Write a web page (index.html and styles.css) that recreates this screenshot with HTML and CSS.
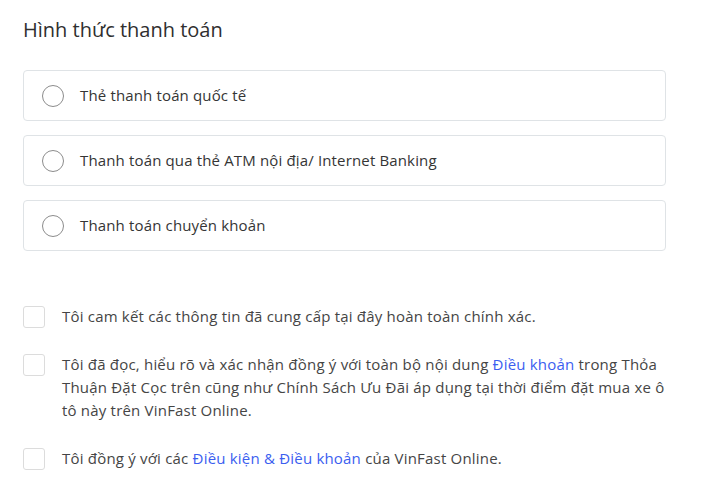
FILE: index.html
```html
<!DOCTYPE html>
<html lang="vi">
<head>
<meta charset="utf-8">
<link rel="stylesheet" href="styles.css">
</head>
<body>
<div class="page">
  <h2 class="title">Hình thức thanh toán</h2>
  <div class="methods">
    <label class="method"><span class="radio"></span><span class="method-text">Thẻ thanh toán quốc tế</span></label>
    <label class="method"><span class="radio"></span><span class="method-text">Thanh toán qua thẻ ATM nội địa/ Internet Banking</span></label>
    <label class="method"><span class="radio"></span><span class="method-text">Thanh toán chuyển khoản</span></label>
  </div>
  <div class="terms">
    <label class="term"><span class="box"></span><span class="term-text">Tôi cam kết các thông tin đã cung cấp tại đây hoàn toàn chính xác.</span></label>
    <label class="term"><span class="box"></span><span class="term-text">Tôi đã đọc, hiểu rõ và xác nhận đồng ý với toàn bộ nội dung <a class="link">Điều khoản</a> trong Thỏa Thuận Đặt Cọc trên cũng như Chính Sách Ưu Đãi áp dụng tại thời điểm đặt mua xe ô tô này trên VinFast Online.</span></label>
    <label class="term"><span class="box"></span><span class="term-text">Tôi đồng ý với các <a class="link">Điều kiện &amp; Điều khoản</a> của VinFast Online.</span></label>
  </div>
</div>
</body>
</html>
```
FILE: styles.css
```css
html, body {
  margin: 0;
  padding: 0;
  background: #ffffff;
}
body {
  font-family: "Open Sans", "Noto Sans", sans-serif;
  color: #3c3c3c;
}
.page {
  width: 643px;
  padding: 16px 0 0 23px;
}
.title {
  margin: 0;
  font-size: 20px;
  font-weight: 400;
  line-height: 28px;
  color: #2f2f2f;
}
.methods {
  margin-top: 26px;
  display: flex;
  flex-direction: column;
  gap: 14px;
}
.method {
  display: flex;
  align-items: center;
  height: 51px;
  box-sizing: border-box;
  border: 1px solid #dfe3e6;
  border-radius: 4px;
  padding-left: 18px;
}
.radio {
  width: 22px;
  height: 22px;
  box-sizing: border-box;
  border: 1px solid #8c8c8c;
  border-radius: 50%;
  flex: none;
}
.method-text {
  margin-left: 16px;
  margin-top: -1px;
  font-size: 15px;
  letter-spacing: 0.15px;
  color: #353535;
}
.terms {
  margin-top: 55px;
  display: flex;
  flex-direction: column;
  gap: 26px;
}
.term {
  display: flex;
  align-items: flex-start;
}
.box {
  width: 22px;
  height: 22px;
  box-sizing: border-box;
  border: 1px solid #dcdcdc;
  border-radius: 3px;
  flex: none;
}
.term-text {
  margin-left: 17px;
  margin-top: -1px;
  font-size: 15px;
  line-height: 23px;
  letter-spacing: 0.2px;
  color: #454545;
}
.link {
  color: #3b5ef0;
  text-decoration: none;
}
```
